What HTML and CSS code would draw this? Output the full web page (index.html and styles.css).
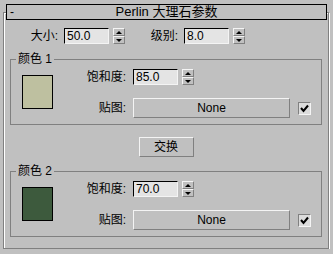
FILE: index.html
```html
<!DOCTYPE html>
<html lang="zh">
<head>
  <meta charset="UTF-8">
  <title>Perlin 大理石参数</title>
  <link rel="stylesheet" href="styles.css">
</head>
<body>

  <!-- ROLLOUT -->
  <div class="rollout">
    <div class="rollout-title">
      <span class="toggle">-</span>
      <span class="title-text">Perlin 大理石参数</span>
    </div>

    <div class="row top-row">
      <span class="lbl">大小:</span>
      <div class="num">50.0</div>
      <div class="spin"><span class="up"></span><span class="down"></span></div>
      <span class="lbl lbl-level">级别:</span>
      <div class="num">8.0</div>
      <div class="spin"><span class="up"></span><span class="down"></span></div>
    </div>

    <!-- COLOR 1 -->
    <div class="group">
      <span class="group-label">颜色 1</span>
      <div class="swatch swatch-1"></div>
      <div class="fields">
        <div class="row">
          <span class="lbl">饱和度:</span>
          <div class="num">85.0</div>
          <div class="spin"><span class="up"></span><span class="down"></span></div>
        </div>
        <div class="row map-row">
          <span class="lbl">贴图:</span>
          <button class="map-btn">None</button>
          <span class="check">
            <svg width="11" height="11" viewBox="0 0 11 11"><polyline points="2,5 4.5,8 9,2.5" fill="none" stroke="#000" stroke-width="2"/></svg>
          </span>
        </div>
      </div>
    </div>

    <button class="swap-btn">交换</button>

    <!-- COLOR 2 -->
    <div class="group group-2">
      <span class="group-label">颜色 2</span>
      <div class="swatch swatch-2"></div>
      <div class="fields">
        <div class="row">
          <span class="lbl">饱和度:</span>
          <div class="num">70.0</div>
          <div class="spin"><span class="up"></span><span class="down"></span></div>
        </div>
        <div class="row map-row">
          <span class="lbl">贴图:</span>
          <button class="map-btn">None</button>
          <span class="check">
            <svg width="11" height="11" viewBox="0 0 11 11"><polyline points="2,5 4.5,8 9,2.5" fill="none" stroke="#000" stroke-width="2"/></svg>
          </span>
        </div>
      </div>
    </div>
  </div>

</body>
</html>
```

FILE: styles.css
```css
* {
  box-sizing: border-box;
}

body {
  margin: 0;
  background: #c0c0c0;
  font-family: "Liberation Sans", "Noto Sans CJK SC", sans-serif;
  font-size: 12px;
  line-height: 14px;
  color: #000;
}

.rollout {
  margin: 12px 4px 0 3px;
  height: 237px;
  border: 1px solid #808080;
  box-shadow: 1px 1px 0 #fff, inset 1px 1px 0 #fff;
}

.rollout-title {
  display: flex;
  height: 16px;
  margin: -9px 1px 0 2px;
  border: 1px solid #000;
  background: #c0c0c0;
  padding: 0 10px 0 3px;
}

.toggle {
  width: 7px;
}

.title-text {
  flex: 1;
  text-align: center;
  font-size: 13px;
}

.row {
  display: flex;
  align-items: center;
  height: 16px;
}

.top-row {
  margin-top: 8px;
  padding-left: 26px;
}

.lbl {
  width: 28px;
  margin-right: 6px;
  text-align: right;
  white-space: nowrap;
}

.lbl-level {
  margin-left: 25px;
}

.num {
  width: 45px;
  height: 16px;
  padding-left: 2px;
  background: #e4e4e4;
  border: 1px solid;
  border-color: #000 #f4f4f4 #f4f4f4 #000;
}

.spin {
  display: flex;
  flex-direction: column;
  width: 12px;
  height: 16px;
  margin-left: 4px;
}

.spin span {
  flex: 1;
  display: flex;
  align-items: center;
  justify-content: center;
  border: 1px solid;
  border-color: #f4f4f4 #808080 #808080 #f4f4f4;
}

.spin span::before {
  content: "";
  border-left: 3px solid transparent;
  border-right: 3px solid transparent;
}

.spin .up::before {
  border-bottom: 3px solid #000;
}

.spin .down::before {
  border-top: 3px solid #000;
}

/* color groups */
.group {
  position: relative;
  display: flex;
  align-items: flex-start;
  height: 66px;
  margin: 15px 6px 0;
  border: 1px solid #808080;
}

.group-2 {
  margin-top: 14px;
}

.group-label {
  position: absolute;
  top: -8px;
  left: 5px;
  padding: 0 2px;
  background: #c0c0c0;
}

.swatch {
  width: 31px;
  height: 34px;
  margin: 15px 0 0 11px;
  border: 1px solid #000;
}

.swatch-1 {
  background: #bec0a0;
}

.swatch-2 {
  background: #3d5a3d;
}

.fields {
  padding-top: 9px;
}

.fields .lbl {
  width: 73px;
  margin-right: 7px;
}

.map-row {
  height: 20px;
  margin-top: 13px;
}

button {
  padding: 0;
  font: inherit;
  color: #000;
  background: #c0c0c0;
  border: 1px solid;
  border-color: #f4f4f4 #808080 #808080 #f4f4f4;
}

.map-btn {
  width: 157px;
  height: 20px;
}

.check {
  display: flex;
  width: 13px;
  height: 13px;
  margin-left: 8px;
  background: #dcdcdc;
  border: 1px solid;
  border-color: #808080 #f4f4f4 #f4f4f4 #808080;
}

.swap-btn {
  display: block;
  width: 55px;
  height: 20px;
  margin: 12px auto 0;
}
```
